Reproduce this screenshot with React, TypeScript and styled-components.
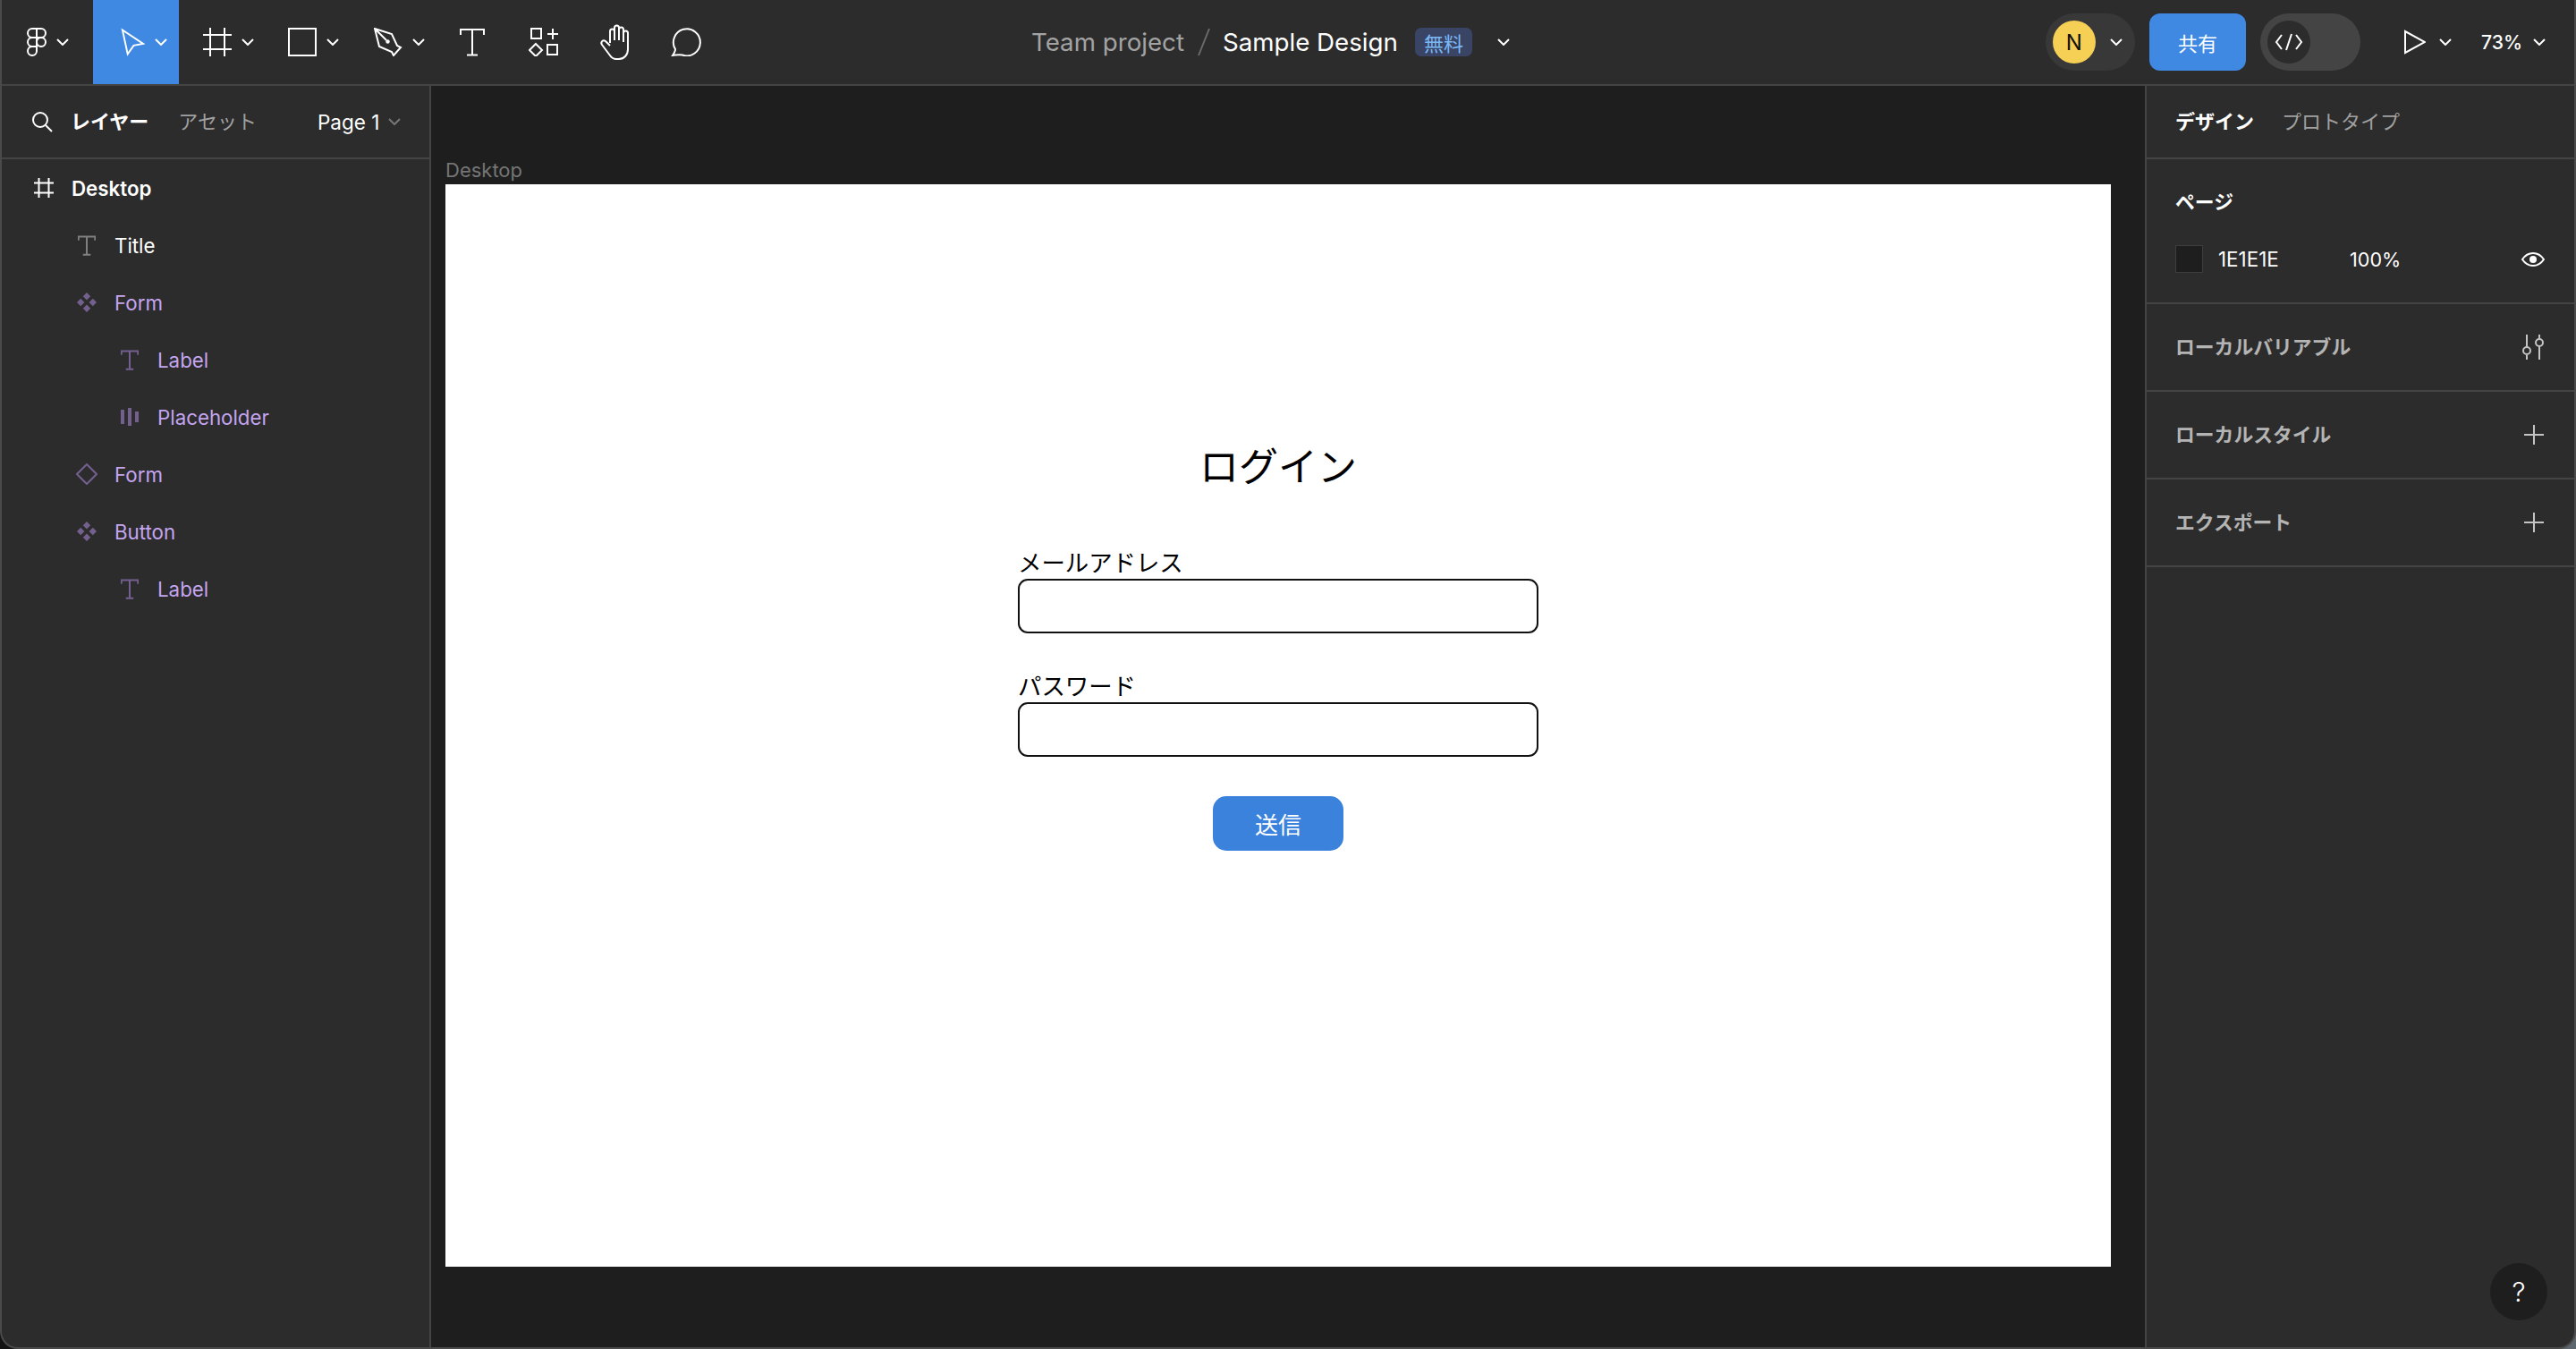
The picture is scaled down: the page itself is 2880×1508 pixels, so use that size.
import React from 'react'
import styled, { createGlobalStyle } from 'styled-components'

const GlobalStyle = createGlobalStyle`
  html, body {
    margin: 0;
    padding: 0;
    height: 100%;
    background: linear-gradient(to right, #141414, #5c666c);
  }
  * {
    box-sizing: border-box;
  }
`

const jp = `Inter, "Noto Sans CJK JP", sans-serif`

const Window = styled.div`
  width: 2880px;
  height: 1508px;
  display: flex;
  flex-direction: column;
  background: #2c2c2c;
  border: 2px solid #4a4a4a;
  border-top: 0;
  border-radius: 0 0 20px 20px;
  overflow: hidden;
  font-family: ${jp};
  color: #fff;
`

const TopBar = styled.header`
  height: 96px;
  flex: none;
  display: flex;
  align-items: stretch;
  border-bottom: 2px solid #444;
`
const ToolGroup = styled.div`
  display: flex;
  align-items: stretch;
`
const Tool = styled.div<{ $w: number; $active?: boolean }>`
  width: ${p => p.$w}px;
  display: flex;
  align-items: center;
  justify-content: center;
  gap: 11px;
  background: ${p => (p.$active ? '#4089e3' : 'transparent')};
  padding-left: ${p => (p.$active ? 18 : 0)}px;
`
const TitleGroup = styled.div`
  margin-left: 331px;
  display: flex;
  align-items: center;
`
const Team = styled.span`
  font-size: 27.7px;
  color: #a3a3a3;
`
const Slash = styled.svg`
  width: 14px;
  height: 32px;
  margin: 0 14px 0 15px;
`
const FileName = styled.span`
  font-size: 27.7px;
  color: #fff;
`
const Badge = styled.span`
  width: 64px;
  height: 32px;
  margin: 0 28px 0 19px;
  border-radius: 7px;
  background: #3a4465;
  color: #7ab8f6;
  font-size: 22px;
  display: flex;
  align-items: center;
  justify-content: center;
`
const RightGroup = styled.div`
  margin-left: auto;
  padding-right: 32px;
  display: flex;
  align-items: center;
`
const AvatarPill = styled.div`
  width: 100px;
  height: 64px;
  border-radius: 32px;
  background: #383838;
  display: flex;
  align-items: center;
  padding-left: 8px;
  gap: 16px;
`
const Avatar = styled.div`
  width: 48px;
  height: 48px;
  border-radius: 50%;
  background: #f6cf55;
  color: #111;
  font-size: 24px;
  display: flex;
  align-items: center;
  justify-content: center;
`
const ShareButton = styled.div`
  width: 108px;
  height: 64px;
  margin-left: 16px;
  border-radius: 12px;
  background: #4089e3;
  font-size: 22px;
  display: flex;
  align-items: center;
  justify-content: center;
`
const DevToggle = styled.div`
  width: 112px;
  height: 64px;
  margin-left: 16px;
  border-radius: 32px;
  background: #444;
  padding: 8px;
`
const DevKnob = styled.div`
  width: 48px;
  height: 48px;
  border-radius: 50%;
  background: #2c2c2c;
  display: flex;
  align-items: center;
  justify-content: center;
`
const PlayBox = styled.div`
  margin-left: 49px;
  display: flex;
  align-items: center;
  gap: 15px;
`
const Zoom = styled.div`
  margin-left: 33px;
  display: flex;
  align-items: center;
  gap: 12px;
  font-size: 21.2px;
  font-weight: 500;
`

const Body = styled.div`
  flex: 1;
  min-height: 0;
  display: flex;
`
const LeftPanel = styled.aside`
  width: 480px;
  flex: none;
  border-right: 2px solid #444;
  display: flex;
  flex-direction: column;
`
const PanelTabs = styled.div`
  height: 82px;
  flex: none;
  display: flex;
  align-items: center;
  border-bottom: 2px solid #444;
`
const LeftTabs = styled(PanelTabs)`
  padding-left: 33px;
`
const Tab = styled.span<{ $on?: boolean; $ml?: number }>`
  margin-left: ${p => p.$ml ?? 0}px;
  padding-bottom: 4px;
  font-size: 22px;
  font-weight: ${p => (p.$on ? 700 : 400)};
  color: ${p => (p.$on ? '#fff' : '#a0a0a0')};
`
const PageSelect = styled.div`
  margin-left: 68px;
  display: flex;
  align-items: center;
  gap: 10px;
  font-size: 22.5px;
`
const Layers = styled.div`
  display: flex;
  flex-direction: column;
`
const LayerRow = styled.div<{ $depth: number; $purple?: boolean; $strong?: boolean }>`
  height: 64px;
  display: flex;
  align-items: center;
  padding-left: ${p => 33 + p.$depth * 48}px;
  font-size: 22.3px;
  font-weight: ${p => (p.$strong ? 600 : 400)};
  color: ${p => (p.$purple ? '#c4a5f0' : '#fff')};
`
const LayerIcon = styled.span<{ $kind: string; $purple?: boolean }>`
  width: 28px;
  height: 28px;
  margin-right: 17px;
  display: flex;
  align-items: center;
  justify-content: center;
  color: ${p => (p.$kind === 'frame' ? '#fff' : p.$purple ? '#74608f' : '#808080')};
`

const Canvas = styled.main`
  flex: 1;
  min-width: 0;
  background: #1e1e1e;
  padding: 84px 0 0 16px;
`
const FrameLabel = styled.div`
  height: 26px;
  font-size: 22px;
  line-height: 20px;
  color: #757575;
`
const Frame = styled.section`
  width: 1862px;
  height: 1210px;
  background: #fff;
  color: #000;
  display: flex;
  flex-direction: column;
  align-items: center;
  padding-top: 286px;
`
const Heading = styled.h1`
  margin: 0 0 62px;
  font-size: 44px;
  font-weight: 400;
  line-height: 60px;
`
const Field = styled.div`
  width: 582px;
  margin-bottom: 44px;
  display: flex;
  flex-direction: column;
`
const FieldLabel = styled.label`
  font-size: 26.4px;
  line-height: 31px;
  padding-bottom: 2px;
`
const Input = styled.div`
  height: 61px;
  border: 2px solid #111;
  border-radius: 11px;
`
const Submit = styled.div`
  width: 146px;
  height: 61px;
  border-radius: 15px;
  background: #3b82dc;
  color: #fff;
  font-size: 26px;
  display: flex;
  align-items: center;
  justify-content: center;
`

const RightPanel = styled.aside`
  width: 480px;
  flex: none;
  border-left: 2px solid #444;
  position: relative;
  display: flex;
  flex-direction: column;
`
const RightTabs = styled(PanelTabs)`
  padding-left: 32px;
  gap: 31px;
`
const PageSection = styled.div`
  height: 162px;
  padding: 34px 33px 0 32px;
  border-bottom: 2px solid #444;
`
const SectionTitle = styled.div<{ $dim?: boolean }>`
  font-size: 21.8px;
  font-weight: 700;
  line-height: 28px;
  color: ${p => (p.$dim ? '#b4b4b4' : '#fff')};
`
const ColorRow = styled.div`
  margin-top: 34px;
  display: flex;
  align-items: center;
  font-size: 22.4px;
`
const Swatch = styled.div`
  width: 31px;
  height: 31px;
  margin-right: 17px;
  background: #1e1e1e;
  border: 1px solid #3d3d3d;
`
const Hex = styled.span`
  width: 147px;
`
const Percent = styled.span`
  flex: 1;
  font-size: 21.6px;
`
const Section = styled.div`
  height: 98px;
  padding: 0 34px 0 32px;
  border-bottom: 2px solid #444;
  display: flex;
  align-items: center;
  justify-content: space-between;
`
const HelpButton = styled.div`
  position: absolute;
  right: 30px;
  bottom: 30px;
  width: 64px;
  height: 64px;
  border-radius: 50%;
  background: #1e1e1e;
  font-size: 30px;
  font-weight: 300;
  display: flex;
  align-items: center;
  justify-content: center;
`

const Chevron = ({ color = '#fff' }: { color?: string }) => (
  <svg width="14" height="8" viewBox="0 0 14 8" fill="none">
    <path d="M1 1l6 6 6-6" stroke={color} strokeWidth="2" />
  </svg>
)

const FigmaLogo = () => (
  <svg width="22" height="32" viewBox="0 0 22 32" fill="none" stroke="#fff" strokeWidth="2">
    <path d="M11 1H6a5 5 0 0 0 0 10h5zM11 1h5a5 5 0 0 1 0 10h-5zM11 11H6a5 5 0 0 0 0 10h5zM11 16a5 5 0 1 0 10 0 5 5 0 1 0-10 0M11 21H6a5 5 0 1 0 5 5z" />
  </svg>
)
const ArrowIcon = () => (
  <svg width="27" height="32" viewBox="0 0 28 32" fill="none" stroke="#fff" strokeWidth="2">
    <path d="M2 2l24 16-11 2-7 10z" />
  </svg>
)
const FrameIcon = ({ size = 32, sw = 2 }: { size?: number; sw?: number }) => (
  <svg width={size} height={size} viewBox="0 0 32 32" fill="none" stroke="currentColor" strokeWidth={sw * 32 / size}>
    <path d="M8 0v32M24 0v32M0 8h32M0 24h32" />
  </svg>
)
const RectIcon = () => (
  <svg width="32" height="32" viewBox="0 0 32 32" fill="none" stroke="#fff" strokeWidth="2">
    <rect x="1" y="1" width="30" height="30" />
  </svg>
)
const PenIcon = () => (
  <svg width="32" height="32" viewBox="0 0 32 32" fill="none" stroke="#fff" strokeWidth="2">
    <path d="M1 1l5 20 14 6 2 4 8-9-4-2-6-13zM1 1l13 13" />
    <circle cx="15.5" cy="15.5" r="2.2" fill="#fff" stroke="none" />
  </svg>
)
const TextIcon = ({ size = 28, sw = 2 }: { size?: number; sw?: number }) => (
  <svg width={size} height={size * 1.15} viewBox="0 0 28 32" fill="none" stroke="currentColor" strokeWidth={sw * 28 / size}>
    <path d="M1 8V2h26v6M14 2v29M8 30.500h12" />
  </svg>
)
const ResourcesIcon = () => (
  <svg width="34" height="32" viewBox="0 0 34 32" fill="none" stroke="#fff" strokeWidth="2">
    <rect x="3" y="1" width="11" height="11" />
    <path d="M27 1v12M21 7h12" />
    <path d="M8 18l7 7-7 7-7-7z" />
    <rect x="21" y="19" width="11" height="11" />
  </svg>
)
const HandIcon = () => (
  <svg width="36" height="40" viewBox="0 0 36 40" fill="none" stroke="#fff" strokeWidth="2" strokeLinejoin="round">
    <path d="M12 21V8a2.500 2.500 0 0 1 5 0v10M17 18V4a2.500 2.500 0 0 1 5 0v14M22 18V6a2.500 2.500 0 0 1 5 0v14M27 18V10a2.500 2.500 0 0 1 5 0v18c0 6-4 11-10 11h-3c-3 0-5-1-7-4l-9-12c-2-3 1-6 4-4l5 5" />
  </svg>
)
const CommentIcon = () => (
  <svg width="36" height="32" viewBox="0 0 36 32" fill="none" stroke="#fff" strokeWidth="2">
    <path d="M2 31c2-3 3-5 3-7a15 15 0 1 1 8 6.500c-4-1-7 0-11 .5z" />
  </svg>
)
const PlayIcon = () => (
  <svg width="24" height="28" viewBox="0 0 24 28" fill="none" stroke="#fff" strokeWidth="2">
    <path d="M1 2v24l22-12z" />
  </svg>
)
const CodeIcon = () => (
  <svg width="32" height="20" viewBox="0 0 32 20" fill="none" stroke="#fff" strokeWidth="2">
    <path d="M8 2L2 10l6 8M24 2l6 8-6 8M19 1l-6 18" />
  </svg>
)
const SearchIcon = () => (
  <svg width="24" height="24" viewBox="0 0 24 24" fill="none" stroke="#fff" strokeWidth="2">
    <circle cx="10" cy="10" r="8" />
    <path d="M16 16l7 7" />
  </svg>
)
const ComponentIcon = () => (
  <svg width="22" height="22" viewBox="0 0 22 22" fill="currentColor">
    <path d="M11 0l4.200 4.200L11 8.400 6.800 4.200zM11 13.600l4.200 4.200L11 22l-4.200-4.200zM4.200 6.800L8.400 11l-4.200 4.200L0 11zM17.800 6.800L22 11l-4.200 4.200L13.600 11z" />
  </svg>
)
const InstanceIcon = () => (
  <svg width="24" height="24" viewBox="0 0 24 24" fill="none" stroke="currentColor" strokeWidth="2">
    <path d="M12 1l11 11-11 11L1 12z" />
  </svg>
)
const PlaceholderIcon = () => (
  <svg width="20" height="20" viewBox="0 0 20 20" fill="currentColor">
    <rect x="0" y="2" width="4" height="16" />
    <rect x="8" y="0" width="4" height="20" />
    <rect x="16" y="4" width="4" height="12" />
  </svg>
)
const EyeIcon = () => (
  <svg width="26" height="16" viewBox="0 0 26 16" fill="none" stroke="#fff" strokeWidth="2">
    <path d="M1 8c3-4.500 7-7 12-7s9 2.500 12 7c-3 4.500-7 7-12 7S4 12.500 1 8z" />
    <circle cx="13" cy="8" r="4" fill="#fff" stroke="none" />
  </svg>
)
const VariablesIcon = () => (
  <svg width="24" height="28" viewBox="0 0 24 28" fill="none" stroke="#c4c4c4" strokeWidth="2">
    <path d="M5 0v13M5 23v5M19 0v4M19 13v15" />
    <circle cx="5" cy="18" r="4" />
    <circle cx="19" cy="9" r="4" />
  </svg>
)
const PlusIcon = () => (
  <svg width="22" height="22" viewBox="0 0 22 22" fill="none" stroke="#c4c4c4" strokeWidth="2">
    <path d="M11 0v22M0 11h22" />
  </svg>
)

type Layer = {
  name: string
  depth: number
  kind: 'frame' | 'text' | 'component' | 'instance' | 'placeholder'
  purple?: boolean
}

const layers: Layer[] = [
  { name: 'Desktop', depth: 0, kind: 'frame' },
  { name: 'Title', depth: 1, kind: 'text' },
  { name: 'Form', depth: 1, kind: 'component', purple: true },
  { name: 'Label', depth: 2, kind: 'text', purple: true },
  { name: 'Placeholder', depth: 2, kind: 'placeholder', purple: true },
  { name: 'Form', depth: 1, kind: 'instance', purple: true },
  { name: 'Button', depth: 1, kind: 'component', purple: true },
  { name: 'Label', depth: 2, kind: 'text', purple: true },
]

const layerIcon = (kind: Layer['kind']) => {
  if (kind === 'frame') return <FrameIcon size={22} />
  if (kind === 'text') return <TextIcon size={20} />
  if (kind === 'component') return <ComponentIcon />
  if (kind === 'instance') return <InstanceIcon />
  return <PlaceholderIcon />
}

const App: React.FC = () => {
  return (
    <>
      <GlobalStyle />
      <Window>
        <TopBar>
          <ToolGroup>
            <Tool $w={102}><FigmaLogo /><Chevron /></Tool>
            <Tool $w={96} $active><ArrowIcon /><Chevron /></Tool>
            <Tool $w={110}><FrameIcon /><Chevron /></Tool>
            <Tool $w={80}><RectIcon /><Chevron /></Tool>
            <Tool $w={112}><PenIcon /><Chevron /></Tool>
            <Tool $w={52}><TextIcon /></Tool>
            <Tool $w={108}><ResourcesIcon /></Tool>
            <Tool $w={52}><HandIcon /></Tool>
            <Tool $w={108}><CommentIcon /></Tool>
          </ToolGroup>
          <TitleGroup>
            <Team>Team project</Team>
            <Slash viewBox="0 0 14 32" fill="none">
              <path d="M13 1L1 31" stroke="#6a6a6a" strokeWidth="2" />
            </Slash>
            <FileName>Sample Design</FileName>
            <Badge>無料</Badge>
            <Chevron />
          </TitleGroup>
          <RightGroup>
            <AvatarPill>
              <Avatar>N</Avatar>
              <Chevron />
            </AvatarPill>
            <ShareButton>共有</ShareButton>
            <DevToggle>
              <DevKnob><CodeIcon /></DevKnob>
            </DevToggle>
            <PlayBox><PlayIcon /><Chevron /></PlayBox>
            <Zoom>73%<Chevron /></Zoom>
          </RightGroup>
        </TopBar>
        <Body>
          <LeftPanel>
            <LeftTabs>
              <SearchIcon />
              <Tab $on $ml={20}>レイヤー</Tab>
              <Tab $ml={33}>アセット</Tab>
              <PageSelect>Page 1<Chevron color="#777" /></PageSelect>
            </LeftTabs>
            <Layers>
              {layers.map((layer, i) => (
                <LayerRow key={i} $depth={layer.depth} $purple={layer.purple} $strong={layer.depth === 0}>
                  <LayerIcon $kind={layer.kind} $purple={layer.purple}>
                    {layerIcon(layer.kind)}
                  </LayerIcon>
                  {layer.name}
                </LayerRow>
              ))}
            </Layers>
          </LeftPanel>
          <Canvas>
            <FrameLabel>Desktop</FrameLabel>
            <Frame>
              <Heading>ログイン</Heading>
              <Field>
                <FieldLabel>メールアドレス</FieldLabel>
                <Input />
              </Field>
              <Field>
                <FieldLabel>パスワード</FieldLabel>
                <Input />
              </Field>
              <Submit>送信</Submit>
            </Frame>
          </Canvas>
          <RightPanel>
            <RightTabs>
              <Tab $on>デザイン</Tab>
              <Tab>プロトタイプ</Tab>
            </RightTabs>
            <PageSection>
              <SectionTitle>ページ</SectionTitle>
              <ColorRow>
                <Swatch />
                <Hex>1E1E1E</Hex>
                <Percent>100%</Percent>
                <EyeIcon />
              </ColorRow>
            </PageSection>
            <Section><SectionTitle $dim>ローカルバリアブル</SectionTitle><VariablesIcon /></Section>
            <Section><SectionTitle $dim>ローカルスタイル</SectionTitle><PlusIcon /></Section>
            <Section><SectionTitle $dim>エクスポート</SectionTitle><PlusIcon /></Section>
            <HelpButton>?</HelpButton>
          </RightPanel>
        </Body>
      </Window>
    </>
  )
}

export default App
